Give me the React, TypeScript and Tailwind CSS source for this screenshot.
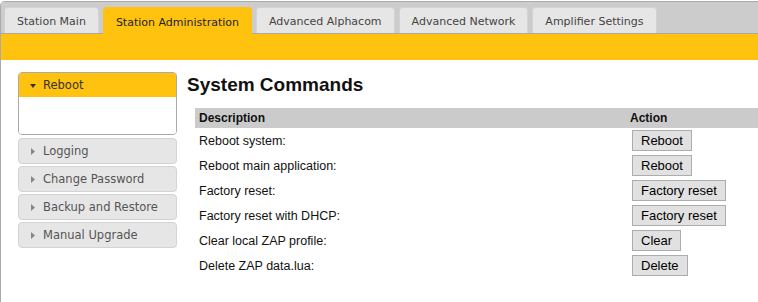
import React from 'react'

const tabs = [
    { label: 'Station Main', active: false },
    { label: 'Station Administration', active: true },
    { label: 'Advanced Alphacom', active: false },
    { label: 'Advanced Network', active: false },
    { label: 'Amplifier Settings', active: false },
]

const menu = ['Logging', 'Change Password', 'Backup and Restore', 'Manual Upgrade']

const commands = [
    { text: 'Reboot system:', button: 'Reboot' },
    { text: 'Reboot main application:', button: 'Reboot' },
    { text: 'Factory reset:', button: 'Factory reset' },
    { text: 'Factory reset with DHCP:', button: 'Factory reset' },
    { text: 'Clear local ZAP profile:', button: 'Clear' },
    { text: 'Delete ZAP data.lua:', button: 'Delete' },
]

const verdana = { fontFamily: '"DejaVu Sans", Verdana, sans-serif' }
const arial = { fontFamily: '"Liberation Sans", Arial, sans-serif' }

const App = () => {
    return (
        <div className="w-[758px] h-[302px] bg-white overflow-hidden pt-px">
            <div className="h-full border-l border-t border-[#aaaaaa] rounded-tl-[5px]">
                {/* tab bar */}
                <div className="flex items-end gap-[4px] h-[32px] pl-[3px] bg-[#cccccc] border-b border-[#aaaaaa]">
                    {tabs.map((t) =>
                        t.active ? (
                            <div
                                key={t.label}
                                style={verdana}
                                className="-mb-px h-[27px] flex items-center pt-[4px] px-[12px] bg-[#ffc20e] border border-b-0 border-[#ffc20e] rounded-t-[4px] text-[11px] text-[#222]"
                            >
                                {t.label}
                            </div>
                        ) : (
                            <div
                                key={t.label}
                                style={verdana}
                                className="h-[26px] flex items-center pt-[4px] px-[12px] bg-[#e6e6e6] border border-b-0 border-[#d3d3d3] rounded-t-[4px] text-[11px] text-[#444]"
                            >
                                {t.label}
                            </div>
                        ),
                    )}
                </div>
                <div className="h-[26px] bg-[#ffc20e]"></div>

                <div className="flex pl-[17px] pt-[12px]">
                    {/* sidebar */}
                    <div className="w-[159px] shrink-0" style={verdana}>
                        <div className="border border-[#aaaaaa] rounded-[4px] overflow-hidden">
                            <div className="h-[24px] flex items-center pt-px bg-[#ffc20e] text-[11.5px] text-[#333]">
                                <svg width="6" height="4" viewBox="0 0 6 4" className="ml-[11px] mr-[7px]">
                                    <path d="M0 0h6L3 4z" fill="#333" />
                                </svg>
                                Reboot
                            </div>
                            <div className="h-[37px] bg-white"></div>
                        </div>
                        <div className="flex flex-col gap-[2px] mt-[3px]">
                            {menu.map((m) => (
                                <div
                                    key={m}
                                    className="h-[26px] flex items-center pt-px bg-[#e6e6e6] border border-[#d3d3d3] rounded-[4px] text-[11.5px] text-[#555]"
                                >
                                    <svg width="4" height="7" viewBox="0 0 4 7" className="ml-[12px] mr-[8px]">
                                        <path d="M0 0l4 3.5-4 3.5z" fill="#888" />
                                    </svg>
                                    {m}
                                </div>
                            ))}
                        </div>
                    </div>

                    {/* main */}
                    <div className="flex-1 ml-[10px] mt-[2px]" style={arial}>
                        <h1 className="text-[19px] font-bold leading-[22px] text-[#111]">System Commands</h1>
                        <div className="ml-[8px] mt-[12px]">
                            <div className="flex h-[20px] items-center bg-[#cbcbcb] text-[12px] font-bold text-[#111]">
                                <div className="w-[431px] pl-[4px]">Description</div>
                                <div className="pl-[4px]">Action</div>
                            </div>
                            {commands.map((c, i) => (
                                <div key={i} className="flex h-[25px] items-center text-[12.5px] text-[#111]">
                                    <div className="w-[431px] pl-[4px] pt-[2px]">{c.text}</div>
                                    <div className="pl-[6px]">
                                        <button className="h-[21px] px-[8px] bg-[#e1e1e1] border border-[#adadad] text-[13px] text-black leading-none">
                                            {c.button}
                                        </button>
                                    </div>
                                </div>
                            ))}
                        </div>
                    </div>
                </div>
            </div>
        </div>
    )
}

export default App
